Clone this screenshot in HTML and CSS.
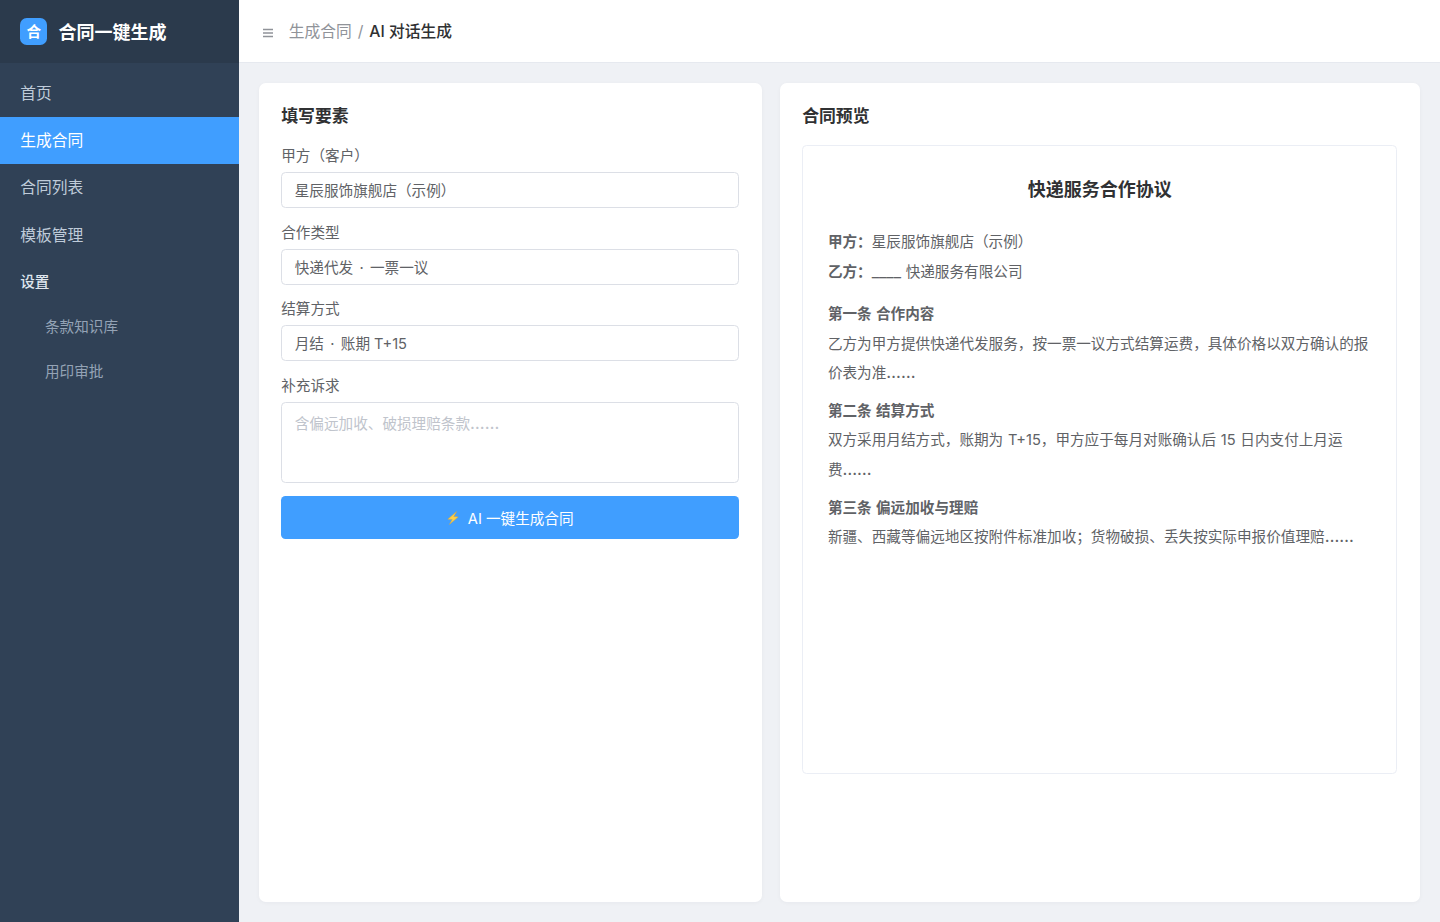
FILE: index.html
```
<!DOCTYPE html>
<html lang="zh-CN">

<head>
    <meta charset="UTF-8">
    <title>合同一键生成</title>
    <link rel="stylesheet" href="styles.css">
</head>

<body>

    <div class="layout">
        <aside class="sidebar">
            <div class="brand">
                <span class="logo">合</span>
                <span class="brand-name">合同一键生成</span>
            </div>
            <nav class="menu">
                <a class="menu-item">首页</a>
                <a class="menu-item active">生成合同</a>
                <a class="menu-item">合同列表</a>
                <a class="menu-item">模板管理</a>
                <div class="menu-group">设置</div>
                <a class="menu-sub">条款知识库</a>
                <a class="menu-sub">用印审批</a>
            </nav>
        </aside>

        <div class="main">
            <header class="topbar">
                <svg class="toggle" viewBox="0 0 10 10">
                    <path d="M0 1.5h10M0 5h10M0 8.5h10" stroke="currentColor" stroke-width="1.4" />
                </svg>
                <div class="crumbs">生成合同 <span class="slash">/</span> <b>AI 对话生成</b></div>
            </header>

            <div class="content">
                <section class="card">
                    <h3 class="card-title">填写要素</h3>
                    <div class="field">
                        <div class="label">甲方（客户）</div>
                        <div class="input">星辰服饰旗舰店（示例）</div>
                    </div>
                    <div class="field">
                        <div class="label">合作类型</div>
                        <div class="input">快递代发 <span class="dot">·</span> 一票一议</div>
                    </div>
                    <div class="field">
                        <div class="label">结算方式</div>
                        <div class="input">月结 <span class="dot">·</span> 账期 T+15</div>
                    </div>
                    <div class="field">
                        <div class="label">补充诉求</div>
                        <div class="input textarea">含偏远加收、破损理赔条款<span class="more">……</span></div>
                    </div>
                    <div class="btn">
                        <svg class="bolt" viewBox="0 0 12 14">
                            <path d="M9.6 0.6L0.8 8.2l4.4.3L2.4 13.4 11.2 5.9l-4.4-.4z" fill="#fcd04a" stroke="#d3a544" stroke-width=".5" />
                        </svg>
                        <span>AI 一键生成合同</span>
                    </div>
                </section>

                <section class="card">
                    <h3 class="card-title">合同预览</h3>
                    <div class="paper">
                        <h4 class="paper-title">快递服务合作协议</h4>
                        <div class="parties">
                            <p><b>甲方：</b>星辰服饰旗舰店（示例）</p>
                            <p><b>乙方：</b><span class="blank">____</span> 快递服务有限公司</p>
                        </div>
                        <div class="clause">
                            <b>第一条 合作内容</b>
                            <p>乙方为甲方提供快递代发服务，按一票一议方式结算运费，具体价格以双方确认的报价表为准<span class="more">……</span></p>
                        </div>
                        <div class="clause">
                            <b>第二条 结算方式</b>
                            <p>双方采用月结方式，账期为 T+15，甲方应于每月对账确认后 15 日内支付上月运费<span class="more">……</span></p>
                        </div>
                        <div class="clause">
                            <b>第三条 偏远加收与理赔</b>
                            <p>新疆、西藏等偏远地区按附件标准加收；货物破损、丢失按实际申报价值理赔<span class="more">……</span></p>
                        </div>
                    </div>
                </section>
            </div>
        </div>
    </div>

</body>

</html>
```
FILE: styles.css
```
* {
    box-sizing: border-box;
}

html,
body {
    margin: 0;
    padding: 0;
    height: 100%;
    overflow: hidden;
    font-family: Inter, "Noto Sans CJK SC", sans-serif;
    font-size: 14.625px;
    color: #606266;
}

h3,
h4,
p {
    margin: 0;
}

.layout {
    display: flex;
    height: 100vh;
}

/* sidebar */
.sidebar {
    width: 238.5px;
    flex-shrink: 0;
    background: #304156;
}

.brand {
    height: 63px;
    display: flex;
    align-items: center;
    gap: 11.25px;
    padding-left: 20.25px;
    background: #2b3a4c;
    color: #fff;
    font-size: 18px;
    font-weight: 600;
}

.brand-name {
    padding-bottom: 2px;
}

.logo {
    width: 27px;
    height: 27px;
    border-radius: 6.75px;
    background: #409eff;
    font-size: 14.625px;
    line-height: 28.5px;
    text-align: center;
}

.menu {
    padding-top: 6.75px;
}

.menu-item {
    display: block;
    height: 47.25px;
    line-height: 48.25px;
    padding-left: 20.25px;
    font-size: 15.75px;
    color: #bfcbd9;
}

.menu-item.active {
    background: #409eff;
    color: #fff;
}

.menu-group {
    height: 45.5px;
    line-height: 47.5px;
    padding-left: 20.25px;
    font-weight: 500;
    color: #dfe6ee;
}

.menu-sub {
    display: block;
    height: 44.5px;
    line-height: 46.5px;
    padding-left: 45px;
    color: #94a3b5;
}

/* top bar */
.main {
    flex: 1;
    display: flex;
    flex-direction: column;
    background: #eff1f5;
}

.topbar {
    height: 63px;
    flex-shrink: 0;
    display: flex;
    align-items: center;
    padding-left: 24.75px;
    background: #fff;
    border-bottom: 1px solid #e6e9ef;
    font-size: 15.75px;
    color: #909399;
}

.toggle {
    width: 10px;
    height: 10px;
    margin: 3px 15.5px 0 0;
}

.crumbs {
    padding-bottom: 1px;
}

.crumbs b {
    font-weight: 500;
    color: #303133;
}

.slash {
    margin: 0 1.5px;
}

/* cards */
.content {
    flex: 1;
    display: grid;
    grid-template-columns: 1.1fr 1.4fr;
    gap: 18px;
    padding: 20.25px;
}

.card {
    padding: 22.5px;
    background: #fff;
    border-radius: 6.75px;
    box-shadow: 0 1px 4px rgba(0, 21, 41, 0.04);
}

.card-title {
    height: 39.4px;
    line-height: 20px;
    font-size: 16.875px;
    font-weight: 600;
    color: #303133;
}

.field {
    margin-bottom: 13.5px;
}

.label {
    line-height: 22.25px;
    margin-bottom: 4.75px;
}

.input {
    height: 36px;
    line-height: 36px;
    padding: 0 12.5px;
    border: 1px solid #dcdfe6;
    border-radius: 4.5px;
}

.textarea {
    height: 81px;
    padding-top: 3px;
    color: #c0c4cc;
}

.dot {
    margin: 0 2.2px;
}

.more {
    font-size: 16.9px;
    line-height: 0;
}

.btn {
    height: 42.75px;
    display: flex;
    align-items: center;
    justify-content: center;
    gap: 9px;
    border-radius: 4.5px;
    background: #409eff;
    color: #fff;
}

.btn span {
    padding-bottom: 1px;
}

.bolt {
    width: 12px;
    height: 14px;
}

/* contract preview */
.paper {
    height: 629px;
    padding: 25.75px 24.75px;
    border: 1px solid #ebeef5;
    border-radius: 4.5px;
    line-height: 29.25px;
    word-spacing: 0.6px;
}

.paper b {
    font-weight: 600;
}

.paper-title {
    line-height: 36px;
    margin-bottom: 20.5px;
    font-size: 18px;
    font-weight: 600;
    text-align: center;
    color: #303133;
}

.parties {
    margin-bottom: 13.5px;
}

.blank {
    font-size: 16px;
    line-height: 0;
}

.clause {
    margin-bottom: 9px;
}
```
